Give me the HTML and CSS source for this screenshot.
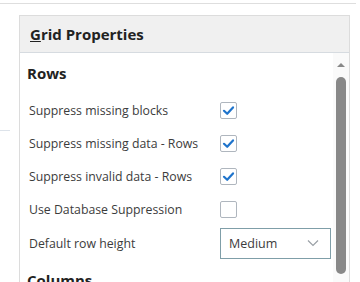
FILE: index.html
```html
<!DOCTYPE html>
<html lang="en">
<head>
  <meta charset="UTF-8">
  <title>Grid Properties</title>
  <link rel="stylesheet" href="styles.css">
</head>
<body>
  <div class="top-rule"></div>

  <div class="layout">
    <!-- left edge of the page behind the panel -->
    <div class="side-stub">
      <div class="stub-line"></div>
    </div>

    <!-- Properties panel -->
    <div class="panel">
      <div class="panel-header">
        <h2><u>G</u>rid Properties</h2>
      </div>

      <div class="panel-body">
        <div class="panel-content">
          <h3>Rows</h3>

          <div class="prop-row">
            <span class="prop-label">Suppress missing blocks</span>
            <span class="checkbox checked">
              <svg viewBox="0 0 17 17" width="17" height="17"><path d="M4 8.8 L7.2 11.8 L13 5.4" fill="none" stroke="#1f74cc" stroke-width="2.2" stroke-linecap="round" stroke-linejoin="round"/></svg>
            </span>
          </div>
          <div class="prop-row">
            <span class="prop-label">Suppress missing data - Rows</span>
            <span class="checkbox checked">
              <svg viewBox="0 0 17 17" width="17" height="17"><path d="M4 8.8 L7.2 11.8 L13 5.4" fill="none" stroke="#1f74cc" stroke-width="2.2" stroke-linecap="round" stroke-linejoin="round"/></svg>
            </span>
          </div>
          <div class="prop-row">
            <span class="prop-label">Suppress invalid data - Rows</span>
            <span class="checkbox checked">
              <svg viewBox="0 0 17 17" width="17" height="17"><path d="M4 8.8 L7.2 11.8 L13 5.4" fill="none" stroke="#1f74cc" stroke-width="2.2" stroke-linecap="round" stroke-linejoin="round"/></svg>
            </span>
          </div>
          <div class="prop-row">
            <span class="prop-label">Use Database Suppression</span>
            <span class="checkbox"></span>
          </div>
          <div class="prop-row select-row">
            <span class="prop-label">Default row height</span>
            <div class="select">
              <span>Medium</span>
              <svg viewBox="0 0 12 8" width="12" height="8"><path d="M1 1.5 L6 6.5 L11 1.5" fill="none" stroke="#9aa0a6" stroke-width="1.2"/></svg>
            </div>
          </div>

          <h3 class="next-section">Columns</h3>
        </div>

        <div class="scrollbar">
          <div class="scroll-arrow"></div>
          <div class="scroll-thumb"></div>
        </div>
      </div>
    </div>
  </div>
</body>
</html>
```

FILE: styles.css
```css
/* Grid properties panel */
:root {
  --border-color: #dcdcdc;
  --header-bg: #f0f0f0;
  --text-color: #3c3c3c;
  --heading-color: #222;
  --check-border: #afb6be;
}

body {
  margin: 0;
  font-family: 'Open Sans', 'Noto Sans', sans-serif;
  color: var(--text-color);
  background: #fff;
  overflow: hidden;
}

.top-rule {
  height: 1px;
  margin-top: 3px;
  width: 356px;
  background: #dedede;
}

.layout {
  display: flex;
  margin-top: 11px;
}

.side-stub {
  width: 19px;
  padding-top: 115px;
}

.stub-line {
  width: 10px;
  height: 1px;
  background: #dde3ea;
}

.panel {
  width: 329px;
  height: 300px;
  border: 1px solid var(--border-color);
  border-bottom: none;
}

.panel-header {
  height: 36px;
  background: var(--header-bg);
  border-bottom: 1px solid #d6dbe0;
  display: flex;
  align-items: center;
  padding-left: 10px;
}

.panel-header h2 {
  margin: 0;
  font-size: 15px;
  font-weight: 700;
  color: var(--heading-color);
}

.panel-body {
  display: flex;
}

.panel-content {
  flex: 1;
  padding: 8px 0 0 7px;
}

.panel-content h3 {
  margin: 0 0 9px;
  font-size: 15px;
  font-weight: 700;
  color: var(--heading-color);
  line-height: 24px;
}

.prop-row {
  display: flex;
  align-items: center;
  height: 33px;
  padding-left: 2px;
}

.prop-label {
  width: 191px;
  font-size: 12.3px;
}

.checkbox {
  width: 15px;
  height: 15px;
  border: 1px solid var(--check-border);
  border-radius: 2px;
  display: flex;
  align-items: center;
  justify-content: center;
}

.checkbox svg {
  flex: none;
}

.select-row {
  height: 34px;
}

.select {
  width: 90px;
  height: 29px;
  border: 1px solid #7f9ea8;
  display: flex;
  align-items: center;
  justify-content: space-between;
  padding: 0 11px 0 8px;
  font-size: 12.5px;
}

.next-section {
  margin-top: 8px !important;
}

.scrollbar {
  width: 16px;
  background: #fafafa;
  display: flex;
  flex-direction: column;
  align-items: center;
  padding-top: 10px;
}

.scroll-arrow {
  width: 0;
  height: 0;
  border-left: 4px solid transparent;
  border-right: 4px solid transparent;
  border-bottom: 4px solid #888;
}

.scroll-thumb {
  margin-top: 10px;
  width: 10px;
  height: 197px;
  background: #888;
  border-radius: 5px;
}
```
